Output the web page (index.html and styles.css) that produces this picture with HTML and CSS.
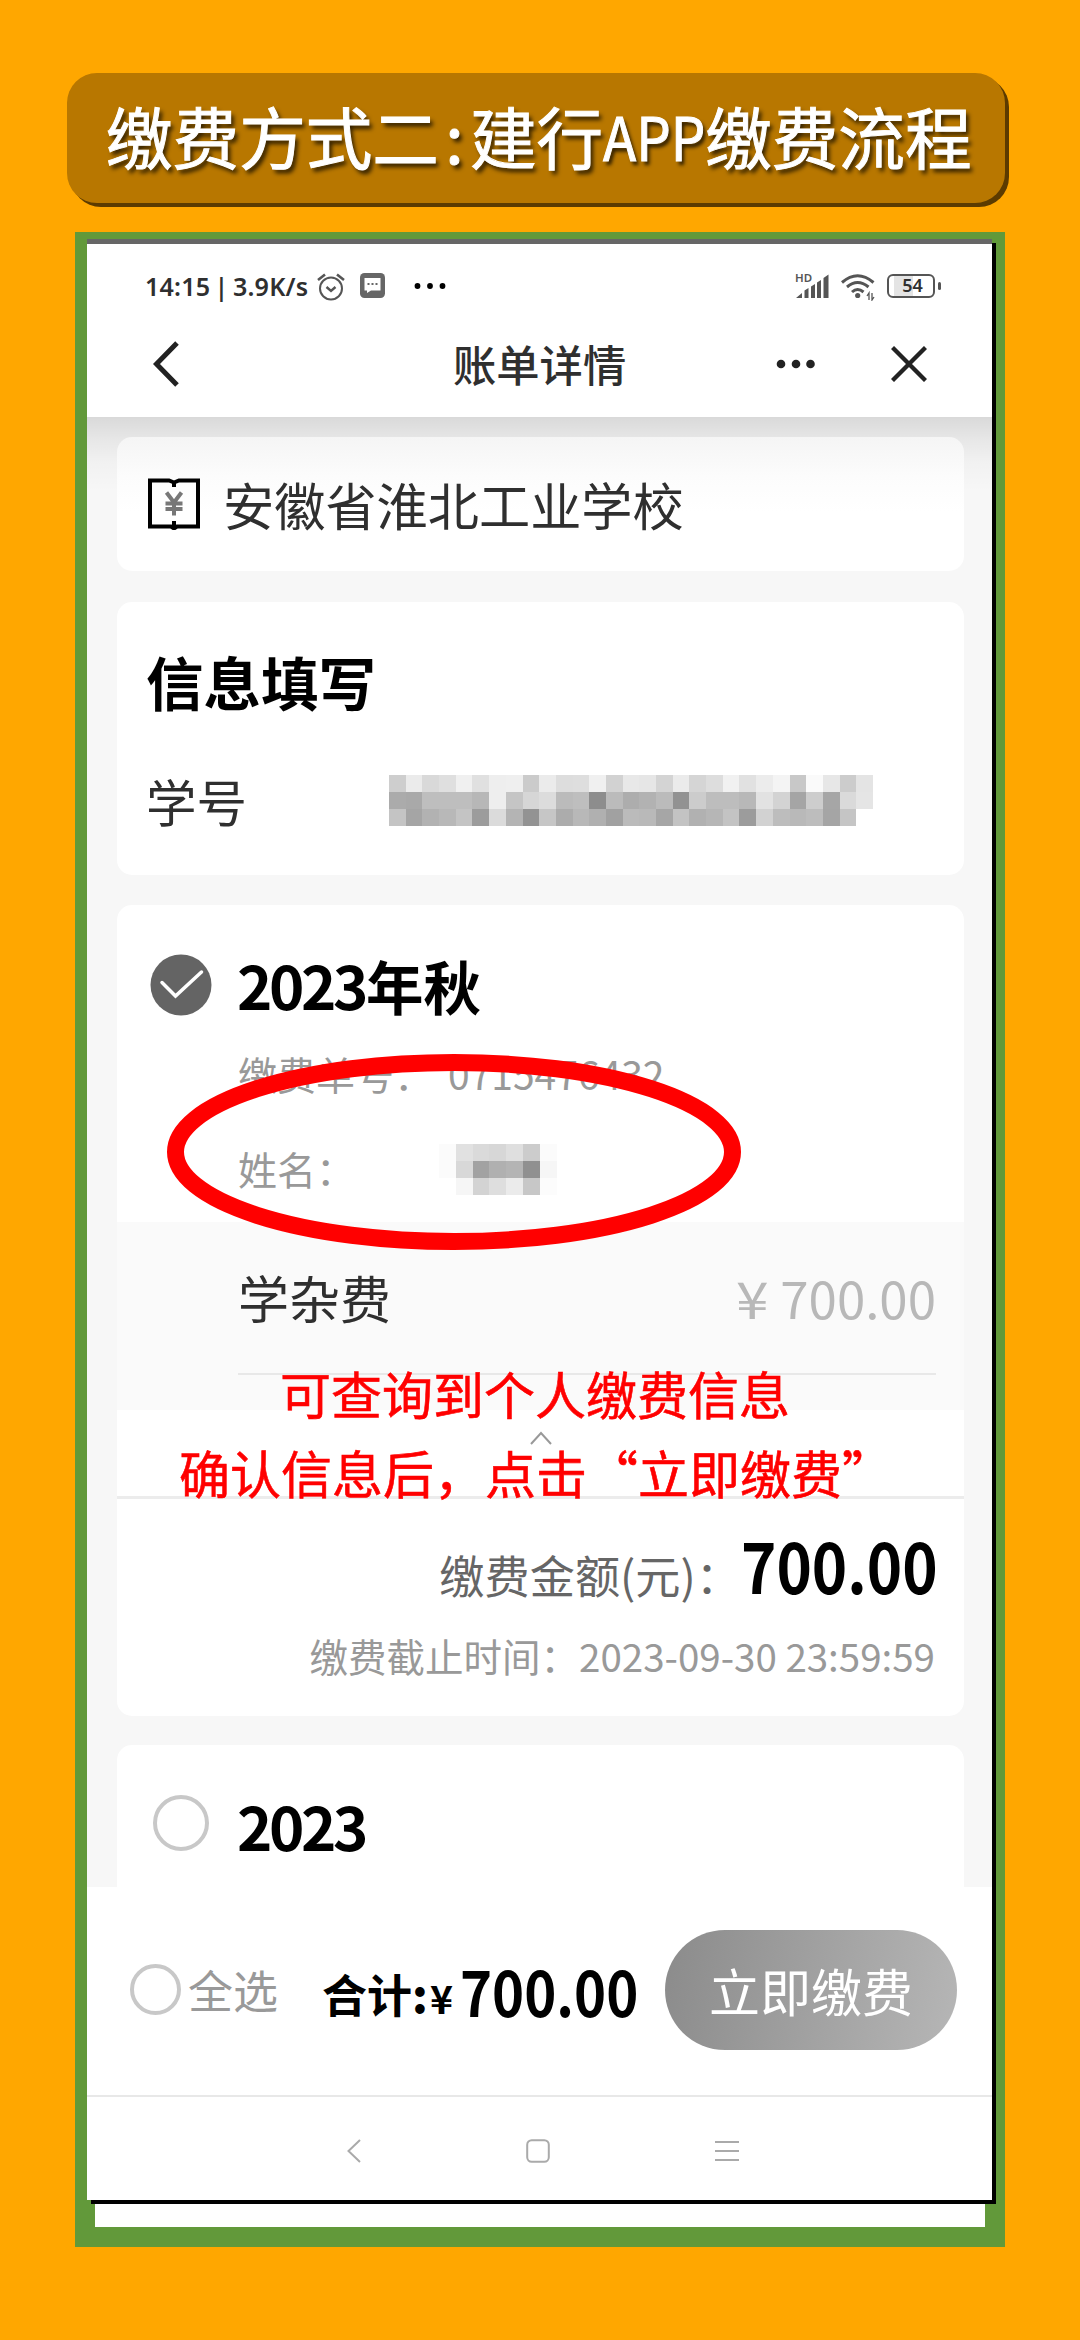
FILE: index.html
```html
<!DOCTYPE html>
<html lang="zh-CN">
<head>
<meta charset="utf-8">
<title>缴费流程</title>
<link rel="stylesheet" href="styles.css">
</head>
<body>
<h1 class="banner"><span>缴费方式二</span><span class="colon">:</span><span>建行</span><span class="latin">APP</span><span>缴费流程</span></h1>
<main class="frame">
  <section class="phone">
    <header class="top">
      <div class="status">
        <span class="clock">14:15 | 3.9K/s</span>
        <svg class="alarm" width="28" height="28" viewBox="0 0 28 28" fill="none" stroke="#555"><circle cx="14" cy="15.500" r="11" stroke-width="2"/><path d="M9.500 14l4.500 4 4.500-4" stroke-width="2.400"/><path d="M1 7l7-5.500M27 7l-7-5.500" stroke-width="2.600"/></svg>
        <svg class="msg" width="25" height="25" viewBox="0 0 25 25"><rect width="25" height="25" rx="4.500" fill="#666"/><path d="M4.500 5h16v12.500H11L7 20v-2.500H4.500z" fill="#fff"/><path d="M7.500 11h2m2 0h2m2 0h2" stroke="#666" stroke-width="2"/></svg>
        <svg class="more" width="32" height="6" viewBox="0 0 32 6"><circle cx="3.500" cy="3" r="2.900"/><circle cx="16" cy="3" r="2.900"/><circle cx="28.500" cy="3" r="2.900"/></svg>
        <span class="cell">
          <span class="hd">HD</span>
          <svg width="34" height="24" viewBox="0 0 34 24" fill="#555"><path d="M0 24l6-5v5zM8.500 24v-7.500l4-2.500v10zM15 24V12.500l4-2.500v14zM21 24V8.500l4-2.500v18zM27.500 24V4l5-3.500V24z"/></svg>
        </span>
        <svg class="wifi" width="34" height="28" viewBox="0 0 34 28" fill="none" stroke="#555" stroke-width="3"><path d="M1 9.500Q16.500-4 32.500 9.500M6 14Q16.500 5 27.500 14M11 19Q16.500 14 22.500 19"/><circle cx="16.700" cy="22.500" r="2.600" fill="#555" stroke="none"/><path d="M28 27v-7l-2 3m5-3v7l2-3" stroke-width="1.300"/></svg>
        <span class="battery">54</span>
      </div>
      <nav class="title-bar">
        <svg class="back" width="28" height="46" viewBox="0 0 28 46" fill="none" stroke="#222" stroke-width="5"><path d="M25 2L4.500 23 25 44"/></svg>
        <h2>账单详情</h2>
        <svg class="dots" width="40" height="10" viewBox="0 0 40 10" fill="#222"><circle cx="5" cy="5" r="4.300"/><circle cx="20" cy="5" r="4.300"/><circle cx="34.500" cy="5" r="4.300"/></svg>
        <svg class="close" width="36" height="36" viewBox="0 0 36 36" stroke="#222" stroke-width="4.300"><path d="M1.500 1.500l33 33M34.500 1.500l-33 33"/></svg>
      </nav>
    </header>

    <div class="feed">
      <article class="card school">
        <svg width="52" height="52" viewBox="0 0 52 52" fill="none" stroke="#000" stroke-width="4"><path d="M26 9V4.500L21 2.500H2v46h21l3 2 3-2h21v-46H31L26 4.500M26 43v8"/><path d="M18.500 14.500l7.500 10 7.500-10M26 24v13.500M17.500 25.500h17M17.500 31h17" stroke="#777"/></svg>
        <span>安徽省淮北工业学校</span>
      </article>

      <article class="card info">
        <h3>信息填写</h3>
        <div class="row"><span>学号</span><div class="mosaic wide" data-rows="ceebd9dff0e0eeefcbebdddef0d2e8e6d4ebd5ddf1e1ecf4c8fae7cce4 aba9bebebeb7eec5d6dcbbbe8dbbadb2bb92ccbdbdb8e2d3a5cda6dae5 c4a5b2b8c49cdbb493c6acb8b0a1bbb9a6c3b1b6c39cd2bdb9bda5c5ff"></div></div>
      </article>

      <article class="card bill">
        <div class="bill-head">
          <svg width="62" height="62" viewBox="0 0 62 62"><circle cx="31" cy="31" r="30.500" fill="#646464"/><path d="M12 28.500L25.500 42 51.500 18" fill="none" stroke="#fff" stroke-width="3.500" stroke-linecap="round"/></svg>
          <h3><span class="num">2023</span>年秋</h3>
        </div>
        <div class="meta order"><span>缴费单号：</span><span class="order-no">0715476432</span></div>
        <div class="meta name"><span>姓名：</span><div class="mosaic narrow" data-rows="fbe1dad7dfccfb fbd8a2b0b490f6 fff6d3deebc7fc"></div></div>
        <div class="fee"><div class="fee-row"><span>学杂费</span><span class="price"><i>¥</i>700.00</span></div></div>
        <div class="fold"><svg width="22" height="14" viewBox="0 0 22 14" fill="none" stroke="#999" stroke-width="2"><path d="M1 13L11 2l10 11"/></svg></div>
        <div class="amount"><span>缴费金额(元)：</span><b>700.00</b></div>
        <div class="deadline">缴费截止时间：2023-09-30 23:59:59</div>
      </article>

      <article class="card next">
        <i class="radio"></i>
        <h3><span class="num">2023</span></h3>
      </article>
    </div>

    <footer class="pay">
      <i class="radio small"></i>
      <span class="all">全选</span>
      <span class="sum-label">合计<b>:</b></span>
      <span class="yen">¥</span>
      <span class="sum">700.00</span>
      <button type="button">立即缴费</button>
    </footer>
    <nav class="sys">
      <svg width="14" height="24" viewBox="0 0 14 24" fill="none" stroke="#aaa" stroke-width="2"><path d="M13 1L1.500 12 13 23"/></svg>
      <svg width="24" height="24" viewBox="0 0 24 24" fill="none" stroke="#aaa" stroke-width="2"><rect x="1.200" y="1.200" width="21.600" height="21.600" rx="4.500"/></svg>
      <svg width="24" height="22" viewBox="0 0 24 22" stroke="#aaa" stroke-width="2"><path d="M0 2h24M0 11h24M0 20h24"/></svg>
    </nav>

    <svg class="ring" width="576" height="198" viewBox="0 0 576 198"><ellipse cx="288" cy="99" rx="278.500" ry="89.500" fill="none" stroke="#f00" stroke-width="17"/></svg>
    <p class="note first">可查询到个人缴费信息</p>
    <p class="note second">确认信息后，点击“立即缴费”</p>
  </section>
  <div class="strip"></div>
</main>
<script src="mosaic.js"></script>
</body>
</html>
```
FILE: styles.css
```css
* { box-sizing: border-box; margin: 0; padding: 0; }
body {
  width: 1080px; height: 2340px; overflow: hidden;
  padding-top: 73px;
  background: #ffa700;
  font-family: "Noto Sans CJK SC", sans-serif;
  color: #2f2f2f;
}
svg { display: block; flex: none; }
h1, h2, h3 { font-weight: 700; }
span, b, h3, h2 { white-space: nowrap; }

.banner {
  display: flex; align-items: center;
  width: 938px; height: 130px; margin-left: 67px; padding: 0 0 7px 39px;
  background: #b87700; border-radius: 30px;
  box-shadow: 4px 4px 0 #5c3b00;
  color: #fff; font-size: 66.600px; font-weight: 400; line-height: 130px;
  text-shadow: 3px 4px 4px rgba(0, 0, 0, .75);
  -webkit-text-stroke: 1px #fff;
}
.banner .colon { width: 31px; text-align: center; }
.banner .latin { width: 102px; font-size: 60px; transform: scaleX(.91); transform-origin: 0 50%; }

.frame {
  width: 930px; height: 2015px; margin: 29px 0 0 75px; padding: 7px 0 0 12px;
  background: #62993a;
}
.strip { width: 890px; height: 27px; margin-left: 8px; background: #fff; }

.phone {
  position: relative; z-index: 1;
  width: 905px; height: 1961px;
  border-top: 5px solid #666;
  background: #fff; box-shadow: 4px 4px 0 #000;
}

.top { height: 173px; }
.status { display: flex; align-items: flex-start; height: 77px; padding: 29px 0 0 58px; }
.clock { width: 172px; margin-top: -5px; font: 600 26px/36px "Noto Sans", sans-serif; letter-spacing: .2px; word-spacing: -2.500px; transform: scaleX(.965); transform-origin: 0 50%; }
.msg { margin-left: 15px; }
.more { margin: 10px 0 0 29px; }
.cell { position: relative; margin-left: 350px; padding-top: 1px; }
.hd { position: absolute; left: -1px; top: -2px; font: 600 11.500px/14px "Noto Sans", sans-serif; color: #555; }
.wifi { margin-left: 11px; }
.battery {
  position: relative; width: 48px; height: 24px; margin: 1px 0 0 12px;
  border: 2.500px solid #555; border-radius: 6px;
  background: linear-gradient(90deg, #fff 5px, #e4e4e4 5px 24px, #fff 24px);
  font: 600 18px/19px "Noto Sans", sans-serif; text-align: center; padding-left: 3px;
}
.battery::after { content: ""; position: absolute; right: -8px; top: 6px; width: 3px; height: 8px; border-radius: 2px; background: #555; }

.title-bar { display: flex; align-items: flex-start; }
.back { margin: 20px 0 0 65px; }
.title-bar h2 { margin: 10px 0 0 273px; width: 180px; font-size: 43.300px; line-height: 64px; font-weight: 500; }
.dots { margin: 38px 0 0 143px; }
.close { margin: 25px 0 0 75px; }

.feed {
  position: relative; height: 1470px; overflow: hidden;
  padding: 20px 28px 0 30px; background: #f7f7f7;
}
.feed::before {
  content: ""; position: absolute; left: 0; right: 0; top: 0; height: 75px;
  background: linear-gradient(rgba(0,0,0,.12), rgba(0,0,0,.065) 22px, rgba(0,0,0,.025) 45px, rgba(0,0,0,0));
}
.card { border-radius: 15px; background: #fff; }
.school { display: flex; align-items: center; height: 134px; padding-left: 31px; font-size: 51.200px; background: linear-gradient(#f5f5f5, #fcfcfc 40px, #fff 75px); position: relative; }
.school span { margin-left: 23px; line-height: 134px; }
.info { height: 273px; margin-top: 31px; padding: 39px 0 0 29px; }
.info h3 { font-size: 57.500px; line-height: 80px; color: #000; }
.row { display: flex; height: 51px; margin-top: 54px; font-size: 50.500px; line-height: 51px; }
.mosaic { display: grid; grid-auto-rows: 17px; height: 51px; }
.wide { grid-template-columns: repeat(29, 16.700px); margin-left: 142px; }
.narrow { grid-template-columns: repeat(7, 16.800px); }

.bill { height: 811px; margin-top: 30px; }
.bill-head { display: flex; height: 130px; padding: 49px 0 0 33px; }
.bill-head h3, .next h3 { margin-left: 25px; font-size: 57.500px; line-height: 60px; color: #000; }
.num { display: inline-block; width: 129px; font-size: 60px; letter-spacing: -3.400px; }
.meta { display: flex; padding-left: 121px; font-size: 39px; line-height: 60px; color: #999; }
.order { padding-top: 8px; height: 104px; }
.order-no { margin-left: 15px; }
.name { height: 83px; }
.name span { width: 201px; margin-top: -1px; }
.name .mosaic { margin-top: 5px; }
.fee { height: 188px; padding: 0 28px 0 121px; background: #fafafa; }
.fee-row { display: flex; justify-content: space-between; height: 153px; border-bottom: 2px solid #e8e8e8; font-size: 51px; line-height: 150px; }
.price { color: #b8b8b8; }
.price i { display: inline-block; font-style: normal; margin-right: 14px; transform: scaleX(1.150); }
.fold { display: flex; justify-content: center; height: 89px; padding-top: 21px; border-bottom: 3px solid #ececec; }
.amount { display: flex; justify-content: flex-end; height: 122px; padding-right: 28px; font-size: 45.200px; line-height: 152px; color: #666; }
.amount b { font-size: 69px; line-height: 131px; color: #000; width: 195px; transform: scaleX(.87); transform-origin: 0 50%; }
.deadline { padding-right: 29px; text-align: right; font-size: 38.500px; line-height: 68px; color: #999; }
.next { display: flex; height: 200px; margin-top: 29px; padding: 50px 0 0 36px; }
.next h3 { margin-left: 28px; }
.radio { flex: none; width: 56px; height: 56px; border: 4px solid #c8c8c8; border-radius: 50%; }
.small { width: 51px; height: 51px; }

.pay { display: flex; align-items: center; height: 210px; padding: 0 0 3px 43px; border-bottom: 2px solid #e8e8e8; line-height: 80px; }
.all { margin-left: 7px; width: 134px; font-size: 45px; color: #999; }
.sum-label { width: 108px; padding-top: 8px; font-size: 45px; font-weight: 700; color: #000; }
.yen { width: 30px; padding-top: 14px; font-size: 39px; font-weight: 700; color: #000; }
.sum { width: 205px; font-size: 62px; font-weight: 700; color: #000; transform: scaleX(.878); transform-origin: 0 50%; }
.pay button { width: 292px; height: 120px; border: 0; border-radius: 60px; background: linear-gradient(100deg, #8b8b8b, #b6b6b6); color: #fff; font: 400 51px/120px "Noto Sans CJK SC", sans-serif; }
.sys { display: flex; justify-content: space-between; align-items: center; padding: 42px 253px 0 260px; }

.ring { position: absolute; left: 78.600px; top: 809px; }
.note { position: absolute; color: #f00; font-size: 51px; line-height: 60px; white-space: nowrap; -webkit-text-stroke: .6px #f00; }
.first { left: 193px; top: 1119px; }
.second { left: 92px; top: 1198px; }
```
FILE: mosaic.js
```js
document.querySelectorAll('.mosaic').forEach(function (box) {
  box.dataset.rows.replace(/ /g, '').match(/../g).forEach(function (v) {
    var cell = document.createElement('i');
    cell.style.background = '#' + v + v + v;
    box.appendChild(cell);
  });
});
```
